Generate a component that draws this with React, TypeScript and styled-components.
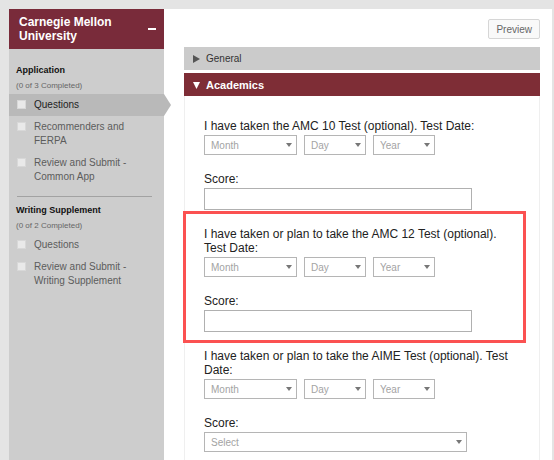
import { useId, useState } from "react";
import styled, { createGlobalStyle, css } from "styled-components";

const GlobalStyle = createGlobalStyle`
  *, *::before, *::after {
    box-sizing: border-box;
  }
  body {
    margin: 0;
    background: #e4e4e4;
    color: #222;
    font-family: "Liberation Sans", Arial, sans-serif;
    font-size: 12px;
    line-height: 14px;
  }
  button, input, select {
    margin: 0;
    font-family: inherit;
  }
`;

const Page = styled.div`
  display: flex;
  min-height: 100vh;
  padding: 9px 2px 0 9px;
`;

const Sidebar = styled.nav`
  flex: 0 0 155px;
  background: #cdcdcd;
`;

const SidebarHeader = styled.header`
  display: flex;
  align-items: center;
  justify-content: space-between;
  padding: 6px 8px 6px 10px;
  background: #792b3a;
  color: #fff;
`;

const SchoolName = styled.h1`
  margin: 0;
  max-width: 110px;
  font-size: 12px;
  line-height: 14px;
`;

const CollapseButton = styled.button`
  display: flex;
  padding: 0;
  border: 0;
  background: none;
  color: inherit;
`;

const Sections = styled.div`
  padding-top: 13px;
`;

const SectionTitle = styled.h2`
  margin: 0;
  padding: 0 7px;
  font-size: 9px;
  line-height: 16px;
  color: #111;
`;

const Progress = styled.p`
  margin: 0;
  padding: 0 7px;
  font-size: 8px;
  line-height: 16px;
  color: #666;
`;

const SectionDivider = styled.hr`
  height: 1px;
  margin: 8px 12px 5px 8px;
  border: 0;
  background: #a2a2a2;
`;

const TaskList = styled.ul`
  margin: 0;
  padding: 0;
  list-style: none;
`;

const TaskRow = styled.li<{ $active?: boolean }>`
  position: relative;
  padding: 4px 12px 4px 8px;
  color: #5c5c5c;

  ${({ $active }) =>
    $active &&
    css`
      background: #b9b9b9;
      color: #222;

      &::after {
        content: "";
        position: absolute;
        top: 0;
        left: 100%;
        width: 7px;
        height: 100%;
        background: inherit;
        clip-path: polygon(0 0, 100% 50%, 0 100%);
      }
    `}
`;

const TaskLabel = styled.label`
  display: flex;
  align-items: flex-start;
  gap: 8px;
  font-size: 10px;
  line-height: 14px;
`;

const TaskCheckbox = styled.input`
  appearance: none;
  flex: none;
  width: 9px;
  height: 9px;
  margin-top: 2px;
  border: 1px solid #d8d8d8;
  background: #e9e9e9;
`;

const Main = styled.main`
  flex: 1;
  display: flex;
  flex-direction: column;
  min-width: 0;
  padding: 10px 12px 0 20px;
  background: #fff;
`;

const Toolbar = styled.div`
  display: flex;
  justify-content: flex-end;
  padding-bottom: 8px;
`;

const PreviewButton = styled.button`
  height: 20px;
  padding: 0 7px;
  border: 1px solid #d6d6d6;
  border-radius: 2px;
  background: #f9f9f9;
  color: #666;
  font-size: 10px;
`;

const PanelHeader = styled.button<{ $open?: boolean }>`
  display: flex;
  align-items: center;
  gap: 6px;
  height: 23px;
  padding: 0 9px;
  border: 0;
  background: ${({ $open }) => ($open ? "#7e2d36" : "#cbcbcb")};
  color: ${({ $open }) => ($open ? "#fff" : "#333")};
  font-size: ${({ $open }) => ($open ? "11px" : "10px")};
  font-weight: ${({ $open }) => ($open ? "bold" : "normal")};

  & + & {
    margin-top: 3px;
  }

  svg {
    fill: ${({ $open }) => ($open ? "#fff" : "#555")};
  }
`;

const PanelBody = styled.form`
  flex: 1;
  display: flex;
  flex-direction: column;
  gap: 17px;
  padding: 23px 29px 8px 19px;
  border: solid #efefef;
  border-width: 0 1px;
`;

const Question = styled.div`
  position: relative;
  display: flex;
  flex-direction: column;
  gap: 17px;
`;

const Highlight = styled.div`
  position: absolute;
  inset: -16px -16px -11px -21px;
  border: 3px solid #fb5151;
  pointer-events: none;
`;

const Field = styled.div`
  display: flex;
  flex-direction: column;
  align-items: flex-start;
  gap: 2px;
`;

const DateRow = styled.div`
  display: flex;
  gap: 7px;
`;

const SelectBox = styled.div<{ $width: number }>`
  position: relative;
  width: ${({ $width }) => $width}px;
  max-width: 100%;

  svg {
    position: absolute;
    top: 8px;
    right: 5px;
    fill: #777;
    pointer-events: none;
  }
`;

const StyledSelect = styled.select`
  appearance: none;
  display: block;
  width: 100%;
  height: 20px;
  padding: 0 6px;
  border: 1px solid #b5b5b5;
  border-radius: 0;
  background: #fff;
  color: #a3a3a3;
  font-size: 10px;
`;

const TextInput = styled.input`
  width: 268px;
  max-width: 100%;
  height: 22px;
  padding: 0 6px;
  border: 1px solid #b0b0b0;
  background: #fff;
  font-size: 12px;
`;

interface SelectProps {
  id?: string;
  name: string;
  width: number;
}

const Select = ({ id, name, width }: SelectProps) => (
  <SelectBox $width={width}>
    <StyledSelect id={id} aria-label={id ? undefined : name}>
      <option>{name}</option>
    </StyledSelect>
    <svg width="6" height="4" viewBox="0 0 6 4" aria-hidden="true">
      <path d="M0 0h6L3 4z" />
    </svg>
  </SelectBox>
);

interface Task {
  label: string;
  active?: boolean;
}

interface SectionProps {
  title: string;
  progress: string;
  tasks: Task[];
}

const Section = ({ title, progress, tasks }: SectionProps) => (
  <section>
    <SectionTitle>{title}</SectionTitle>
    <Progress>{progress}</Progress>
    <TaskList>
      {tasks.map(({ label, active }) => (
        <TaskRow key={label} $active={active}>
          <TaskLabel>
            <TaskCheckbox type="checkbox" />
            <span>{label}</span>
          </TaskLabel>
        </TaskRow>
      ))}
    </TaskList>
  </section>
);

interface TestQuestionProps {
  title: string;
  highlighted?: boolean;
  scoreAsSelect?: boolean;
}

const TestQuestion = ({
  title,
  highlighted,
  scoreAsSelect,
}: TestQuestionProps) => {
  const id = useId();
  const [score, setScore] = useState("");

  return (
    <Question>
      <Field>
        <label htmlFor={`${id}-month`}>{title}</label>
        <DateRow>
          <Select id={`${id}-month`} name="Month" width={93} />
          <Select name="Day" width={62} />
          <Select name="Year" width={62} />
        </DateRow>
      </Field>
      <Field>
        <label htmlFor={`${id}-score`}>Score:</label>
        {scoreAsSelect ? (
          <Select id={`${id}-score`} name="Select" width={263} />
        ) : (
          <TextInput
            id={`${id}-score`}
            type="text"
            value={score}
            onChange={(e) => setScore(e.target.value)}
          />
        )}
      </Field>
      {highlighted && <Highlight />}
    </Question>
  );
};

const App = () => (
  <>
    <GlobalStyle />
    <Page>
      <Sidebar>
        <SidebarHeader>
          <SchoolName>Carnegie Mellon University</SchoolName>
          <CollapseButton type="button" aria-label="Collapse">
            <svg width="8" height="2" viewBox="0 0 8 2" aria-hidden="true">
              <path d="M0 0h8v2H0z" fill="currentColor" />
            </svg>
          </CollapseButton>
        </SidebarHeader>
        <Sections>
          <Section
            title="Application"
            progress="(0 of 3 Completed)"
            tasks={[
              { label: "Questions", active: true },
              { label: "Recommenders and FERPA" },
              { label: "Review and Submit - Common App" },
            ]}
          />
          <SectionDivider />
          <Section
            title="Writing Supplement"
            progress="(0 of 2 Completed)"
            tasks={[
              { label: "Questions" },
              { label: "Review and Submit - Writing Supplement" },
            ]}
          />
        </Sections>
      </Sidebar>
      <Main>
        <Toolbar>
          <PreviewButton type="button">Preview</PreviewButton>
        </Toolbar>
        <PanelHeader type="button" aria-expanded={false}>
          <svg width="7" height="8" viewBox="0 0 7 8" aria-hidden="true">
            <path d="M0 0l7 4-7 4z" />
          </svg>
          General
        </PanelHeader>
        <PanelHeader type="button" aria-expanded $open>
          <svg width="7" height="8" viewBox="0 0 7 8" aria-hidden="true">
            <path d="M0 1h7L3.5 8z" />
          </svg>
          Academics
        </PanelHeader>
        <PanelBody>
          <TestQuestion title="I have taken the AMC 10 Test (optional). Test Date:" />
          <TestQuestion
            title="I have taken or plan to take the AMC 12 Test (optional). Test Date:"
            highlighted
          />
          <TestQuestion
            title="I have taken or plan to take the AIME Test (optional). Test Date:"
            scoreAsSelect
          />
        </PanelBody>
      </Main>
    </Page>
  </>
);

export default App;
